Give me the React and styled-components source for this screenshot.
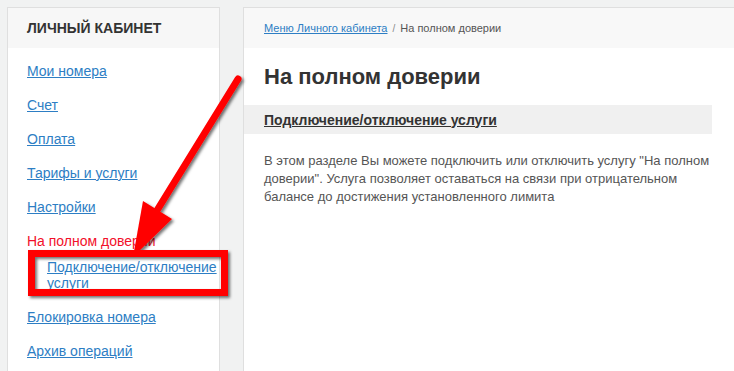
import React from 'react';
import styled, { createGlobalStyle } from 'styled-components';

const GlobalStyle = createGlobalStyle`
  html, body {
    margin: 0;
    padding: 0;
    background: #f1f2f2;
    overflow: hidden;
  }
  body {
    font-family: "Liberation Sans", Arial, sans-serif;
  }
  * {
    box-sizing: border-box;
  }
`;

const Page = styled.div`
  position: relative;
  display: flex;
  gap: 23px;
  padding: 7px 0 0 7px;
  width: 100vw;
  height: 100vh;
  overflow: hidden;
`;

const Sidebar = styled.aside`
  width: 213px;
  flex-shrink: 0;
  background: #fff;
  border: 1px solid #dfdfdf;
  border-bottom: none;
`;

const SidebarHead = styled.div`
  height: 40px;
  display: flex;
  align-items: center;
  padding-left: 19px;
  background: #f7f7f7;
  color: #333;
  font-size: 14px;
  font-weight: bold;
  text-transform: uppercase;
`;

const Nav = styled.ul`
  list-style: none;
  margin: 0;
  padding: 6px 0 0 19px;
`;

const NavItem = styled.li`
  height: 34px;
  display: flex;
  align-items: center;
  font-size: 14px;
`;

const NavLink = styled.a`
  color: ${p => (p.$active ? '#f2102a' : '#2d7ec4')};
  text-decoration: ${p => (p.$active ? 'none' : 'underline')};
  cursor: pointer;
`;

const SubItem = styled.li`
  padding: 1px 0 9px 20px;
  font-size: 14px;
  line-height: 16px;
`;

const Main = styled.main`
  flex: 1;
  background: #fff;
  border: 1px solid #dfdfdf;
  border-right: none;
  border-bottom: none;
`;

const Crumbs = styled.div`
  height: 40px;
  display: flex;
  align-items: center;
  gap: 5px;
  padding-left: 20px;
  background: #f8f8f8;
  font-size: 11px;
  color: #555;
`;

const CrumbLink = styled.a`
  color: #2d7ec4;
  text-decoration: underline;
`;

const Sep = styled.span`
  color: #888;
  font-size: 10px;
`;

const Title = styled.h1`
  margin: 0;
  height: 57px;
  display: flex;
  align-items: center;
  padding-left: 20px;
  font-size: 22px;
  font-weight: bold;
  color: #333;
`;

const SectionBar = styled.div`
  width: 468px;
  height: 29px;
  display: flex;
  align-items: center;
  padding-left: 20px;
  background: #f0f0f0;
`;

const SectionTitle = styled.span`
  font-size: 14px;
  font-weight: bold;
  color: #333;
  text-decoration: underline;
`;

const Text = styled.p`
  margin: 18px 0 0;
  width: 470px;
  padding-left: 20px;
  font-size: 13px;
  line-height: 18px;
  color: #555;
`;

const Overlay = styled.svg`
  position: absolute;
  left: 0;
  top: 0;
  pointer-events: none;
`;

function Annotation() {
  return (
    <Overlay width="734" height="371" viewBox="0 0 734 371">
      <defs>
        <filter id="sh" x="-20%" y="-20%" width="140%" height="140%">
          <feDropShadow dx="2" dy="2" stdDeviation="1.6" floodColor="#000" floodOpacity="0.55" />
        </filter>
      </defs>
      <g filter="url(#sh)">
        <rect x="31.5" y="253.5" width="193" height="39" fill="none" stroke="#ff0000" strokeWidth="7" />
        <line x1="238" y1="79" x2="156" y2="212" stroke="#ff0000" strokeWidth="7" strokeLinecap="round" />
        <polygon points="133,257 143,201 172,219" fill="#ff0000" />
      </g>
    </Overlay>
  );
}

const items = ['Мои номера', 'Счет', 'Оплата', 'Тарифы и услуги', 'Настройки'];
const tail = ['Блокировка номера', 'Архив операций'];

export default function App() {
  return (
    <>
      <GlobalStyle />
      <Page>
        <Sidebar>
          <SidebarHead>Личный кабинет</SidebarHead>
          <Nav>
            {items.map(t => (
              <NavItem key={t}>
                <NavLink>{t}</NavLink>
              </NavItem>
            ))}
            <NavItem>
              <NavLink $active>На полном доверии</NavLink>
            </NavItem>
            <SubItem>
              <NavLink>Подключение/отключение услуги</NavLink>
            </SubItem>
            {tail.map(t => (
              <NavItem key={t}>
                <NavLink>{t}</NavLink>
              </NavItem>
            ))}
          </Nav>
        </Sidebar>
        <Main>
          <Crumbs>
            <CrumbLink>Меню Личного кабинета</CrumbLink>
            <Sep>/</Sep>
            <span>На полном доверии</span>
          </Crumbs>
          <Title>На полном доверии</Title>
          <SectionBar>
            <SectionTitle>Подключение/отключение услуги</SectionTitle>
          </SectionBar>
          <Text>
            В этом разделе Вы можете подключить или отключить услугу "На полном доверии". Услуга
            позволяет оставаться на связи при отрицательном балансе до достижения установленного
            лимита
          </Text>
        </Main>
        <Annotation />
      </Page>
    </>
  );
}
